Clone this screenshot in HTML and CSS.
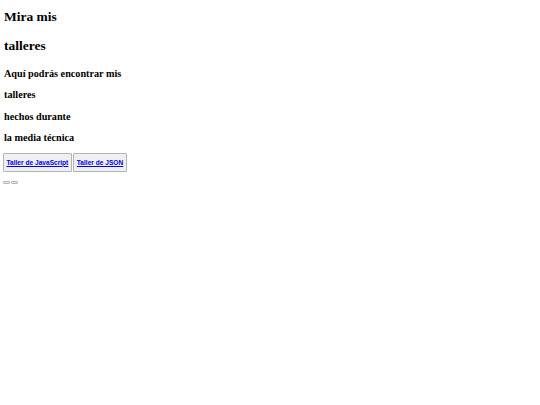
FILE: index.html
```html
<!DOCTYPE html>
<html lang="es">
<head>
<meta charset="utf-8">
<title>Mira mis talleres</title>
<link rel="stylesheet" href="styles.css">
</head>
<body>
  <header class="title">
    <h1 class="title-line">Mira mis</h1>
    <h1 class="title-line">talleres</h1>
  </header>
  <section class="intro">
    <h3 class="intro-line">Aquí podrás encontrar mis</h3>
    <h3 class="intro-line">talleres</h3>
    <h3 class="intro-line">hechos durante</h3>
    <h3 class="intro-line">la media técnica</h3>
  </section>
  <nav class="buttons">
    <button class="btn"><a class="btn-link" href="#">Taller de JavaScript</a></button>
    <button class="btn"><a class="btn-link" href="#">Taller de JSON</a></button>
  </nav>
  <div class="mini">
    <button class="mini-btn"></button>
    <button class="mini-btn"></button>
  </div>
</body>
</html>
```
FILE: styles.css
```css
html, body {
  background: #ffffff;
}
body {
  margin: 0;
  padding: 4px;
  font-family: "Liberation Serif", "Times New Roman", serif;
  color: #000000;
}
.title {
  display: flex;
  flex-direction: column;
  gap: 14px;
  margin-top: 5px;
}
.title-line {
  margin: 0;
  font-size: 13.5px;
  line-height: 15px;
  font-weight: bold;
}
.intro {
  display: flex;
  flex-direction: column;
  gap: 9.5px;
  margin-top: 14.5px;
}
.intro-line {
  margin: 0;
  font-size: 10.2px;
  line-height: 12px;
  font-weight: bold;
}
.buttons {
  display: flex;
  gap: 1.5px;
  margin-top: 9px;
  margin-left: -1px;
}
.btn {
  height: 19px;
  margin: 0;
  padding: 0 2.5px;
  border: 1px solid #b4b4b4;
  border-radius: 1px;
  background: #efefef;
  display: flex;
  align-items: center;
  font-family: "Liberation Sans", Arial, sans-serif;
  font-size: 7px;
}
.btn-link {
  color: #0000ee;
  text-decoration: underline;
  font-family: "Liberation Sans", Arial, sans-serif;
  font-size: 6.6px;
  font-weight: bold;
  line-height: 8px;
}
.mini {
  display: flex;
  gap: 1px;
  margin-top: 9px;
  margin-left: -1px;
}
.mini-btn {
  width: 7px;
  height: 3px;
  margin: 0;
  padding: 0;
  border: 1px solid #b4b4b4;
  border-radius: 1px;
  background: #efefef;
}
```
